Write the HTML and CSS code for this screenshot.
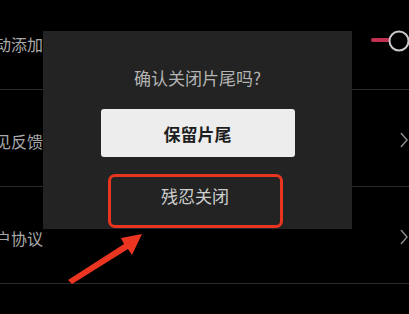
FILE: index.html
```html
<!DOCTYPE html>
<html lang="zh-CN">

<head>
    <meta charset="UTF-8">
    <meta name="viewport" content="width=device-width, initial-scale=1.0">
    <title>确认关闭片尾</title>
    <link rel="stylesheet" href="styles.css">
</head>

<body>
    <div class="list">
        <div class="row">
            <div class="label">自动添加</div>
            <svg class="toggle" width="40" height="24" viewBox="0 0 40 24">
                <line x1="3" y1="11" x2="19" y2="11" stroke="#c0304f" stroke-width="4" stroke-linecap="round" />
                <circle cx="29" cy="12" r="9.5" fill="#000" stroke="#c9c9c9" stroke-width="2" />
            </svg>
        </div>
        <div class="row">
            <div class="label">意见反馈</div>
            <svg class="chevron" width="8" height="16" viewBox="0 0 8 16">
                <polyline points="1,1 7,8 1,15" fill="none" stroke="#8a8a8a" stroke-width="1.5" />
            </svg>
        </div>
        <div class="row">
            <div class="label">用户协议</div>
            <svg class="chevron" width="8" height="16" viewBox="0 0 8 16">
                <polyline points="1,1 7,8 1,15" fill="none" stroke="#8a8a8a" stroke-width="1.5" />
            </svg>
        </div>
    </div>

    <div class="dialog">
        <div class="dialog-title">确认关闭片尾吗?</div>
        <button class="btn keep">保留片尾</button>
        <button class="btn close">残忍关闭</button>
    </div>

    <svg class="arrow" width="409" height="314" viewBox="0 0 409 314">
        <polygon points="68,280 124,244 121,238 142,234 132,255 128,249 72,284" fill="#ec3520" />
    </svg>
</body>

</html>
```

FILE: styles.css
```css
body {
    margin: 0;
    background-color: #000;
    font-family: "Noto Sans CJK SC", "Noto Sans", sans-serif;
    overflow: hidden;
    height: 314px;
    position: relative;
}

.list {
    margin-top: -7px;
}

.row {
    display: flex;
    align-items: center;
    height: 96px;
    border-bottom: 1px solid #2b2b2b;
}

.label {
    margin-left: -21px;
    margin-top: 6px;
    font-size: 16px;
    color: #a9a9a9;
}

.toggle {
    margin-left: auto;
    margin-right: -1px;
}

.chevron {
    margin-left: auto;
    margin-right: 1px;
    margin-top: 4px;
}

.dialog {
    position: absolute;
    left: 43px;
    top: 31px;
    width: 309px;
    height: 198px;
    background-color: #232323;
    display: flex;
    flex-direction: column;
    align-items: center;
    box-sizing: border-box;
    padding-top: 38px;
}

.dialog-title {
    font-size: 17px;
    line-height: 18px;
    color: #b4b4b4;
}

.btn {
    font-family: inherit;
    font-size: 17px;
    border: none;
    padding: 0;
    cursor: pointer;
}

.keep {
    margin-top: 22px;
    width: 194px;
    height: 48px;
    background-color: #ededed;
    color: #1e1e1e;
    font-weight: bold;
    border-radius: 3px;
}

.close {
    margin-top: 17px;
    margin-left: -5px;
    width: 175px;
    height: 54px;
    box-sizing: border-box;
    background-color: #232323;
    color: #cfcfcf;
    border: 3px solid #e8351f;
    border-radius: 7px;
    padding-bottom: 11px;
}

.arrow {
    position: absolute;
    left: 0;
    top: 0;
}
```
